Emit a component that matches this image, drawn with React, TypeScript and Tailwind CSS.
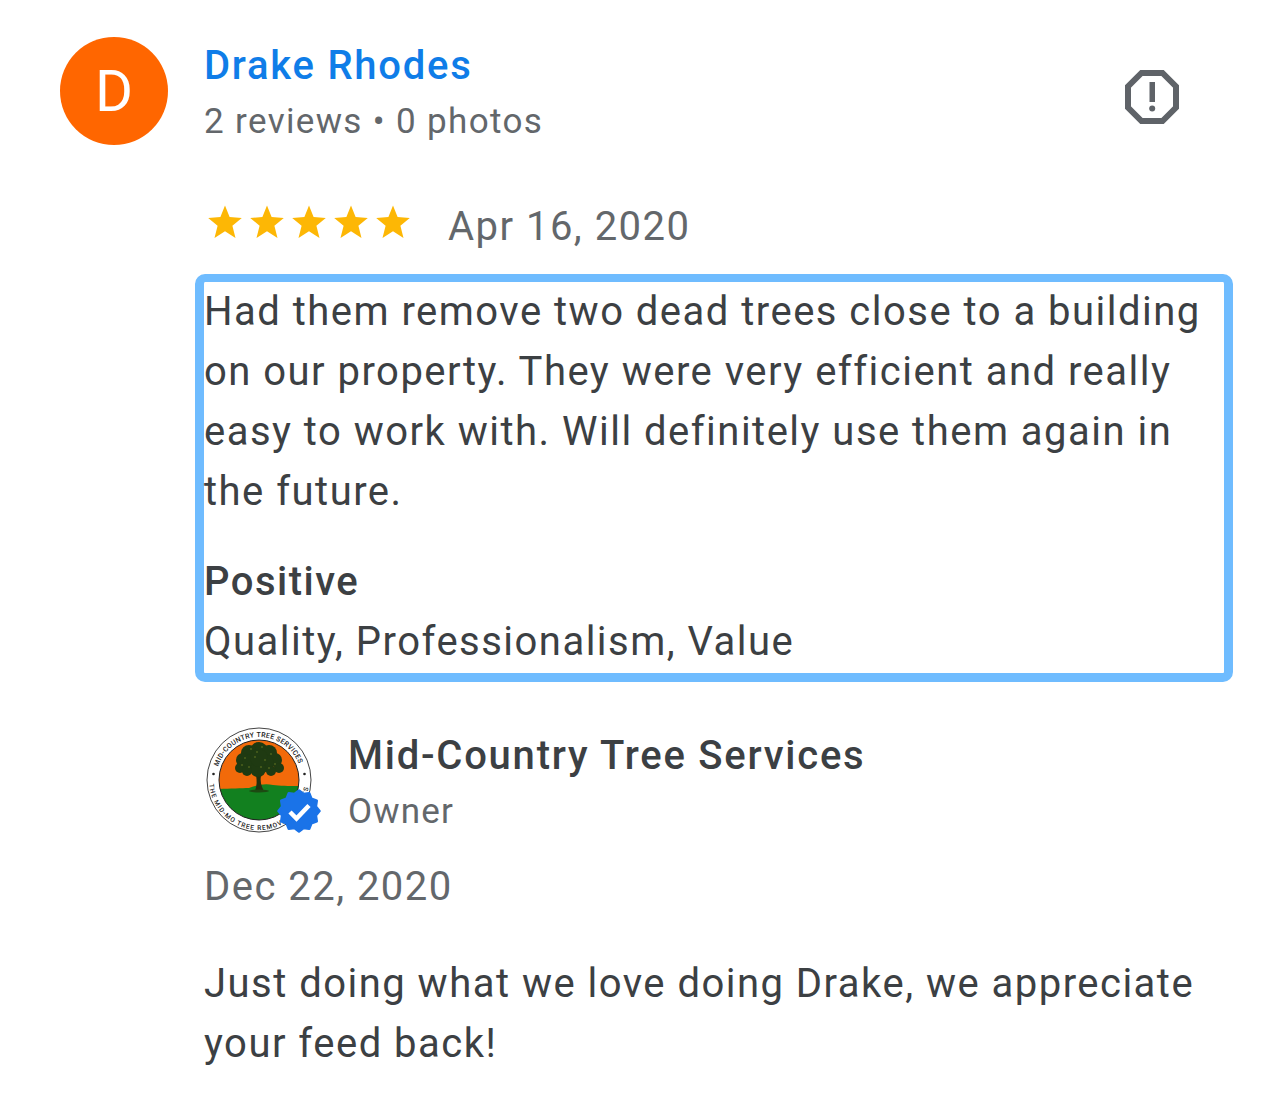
const Star = () => (
  <svg width="34" height="34" viewBox="0 0 34 34" className="block">
    <path d="M17 0.5l4.6 11.6 12.2 .8-9.4 7.9 3.1 12.1-10.5-6.7-10.5 6.7 3.1-12.1L.2 12.9l12.2-.8z" fill="#fdb705" />
  </svg>
);

const badgePoints = Array.from({ length: 24 }, (_, i) => {
  const r = i % 2 === 0 ? 20.5 : 17.5;
  const a = (i * Math.PI) / 12 - Math.PI / 2;
  return `${(22 + r * Math.cos(a)).toFixed(2)},${(22 + r * Math.sin(a)).toFixed(2)}`;
}).join(" ");

const leaves: [number, number, number][] = [
  [54, 24, 9], [44, 26, 8], [64, 26, 8], [38, 33, 7], [70, 33, 7], [35, 41, 5], [74, 41, 5],
  [46, 36, 9], [60, 36, 9], [53, 42, 8], [42, 44, 5], [66, 44, 5], [54, 31, 9],
];
const specks: [number, number][] = [
  [46, 22], [57, 20], [66, 27], [40, 31], [50, 30], [60, 33], [70, 37], [44, 40], [56, 40], [37, 38], [64, 41], [52, 25],
];

const Logo = () => (
  <div className="relative w-[120px] h-[110px] shrink-0 ml-[1px]">
    <svg width="110" height="110" viewBox="0 0 110 110" className="block">
      <defs>
        <clipPath id="inner"><circle cx="54" cy="53" r="40" /></clipPath>
        <path id="topArc" d="M13.100 39.700A43 43 0 0 1 94.900 39.700" />
        <path id="botArc" d="M4.200 57.400A50 50 0 0 0 103.800 57.400" />
      </defs>
      <circle cx="54" cy="53" r="52" fill="#fff" stroke="#444" strokeWidth="1" />
      <g clipPath="url(#inner)">
        <rect x="0" y="0" width="110" height="66" fill="#f26a0a" />
        <path d="M10 62c12 0 26-1 34-1 8-3 16-5 24-3 8 1 18 1 32 1v50H10z" fill="#12801f" />
      </g>
      <circle cx="54" cy="53" r="40" fill="none" stroke="#222" strokeWidth="1" />
      <path d="M50 64c2-6 2-10 1-16h5c-1 6 0 11 3 16z" fill="#23300f" />
      <ellipse cx="54" cy="64" rx="10" ry="1.500" fill="#1c4a12" />
      <g fill="#1f3a12">
        {leaves.map(([x, y, r]) => <circle key={`${x}-${y}`} cx={x} cy={y} r={r} />)}
      </g>
      <g fill="#7d8a2a">
        {specks.map(([x, y]) => <circle key={`${x}-${y}`} cx={x} cy={y} r={0.7} />)}
      </g>
      <circle cx="8.500" cy="47" r="1.300" fill="#222" />
      <circle cx="99.500" cy="47" r="1.300" fill="#222" />
      <text fontFamily="Roboto, sans-serif" fontSize="7" fontWeight="500" fill="#222">
        <textPath href="#topArc" textLength="106" lengthAdjust="spacing">MID-COUNTRY TREE SERVICES</textPath>
      </text>
      <text fontFamily="Roboto, sans-serif" fontSize="6.500" fontWeight="500" fill="#222">
        <textPath href="#botArc" textLength="146" lengthAdjust="spacing">THE MID-MO TREE REMOVAL EXPERTS</textPath>
      </text>
    </svg>
    <svg width="44" height="44" viewBox="0 0 44 44" className="absolute left-[72px] top-[62px]">
      <polygon points={badgePoints} fill="#1a73e8" stroke="#1a73e8" strokeWidth="2.500" strokeLinejoin="round" />
      <path d="M13 23l6.500 6.500L32 16.500" fill="none" stroke="#fff" strokeWidth="4.500" />
    </svg>
  </div>
);

export default function App() {
  return (
    <div className="w-[1284px] h-[1100px] bg-white overflow-hidden pl-[60px] pt-[37px] pr-[51px] font-['Roboto',sans-serif] tracking-[1.48px] text-[#3c4043]">
      <div className="flex">
        <div className="w-[108px] h-[108px] rounded-full bg-[#ff6600] text-white flex items-center justify-center text-[58px] shrink-0 mr-[36px] tracking-normal">
          D
        </div>
        <div className="flex-1 flex items-start justify-between pr-[53px]">
          <div className="pt-[1px]">
            <div className="text-[40px] leading-[56px] font-medium text-[#0f7de8] tracking-[1.75px]">Drake Rhodes</div>
            <div className="text-[35px] leading-[56px] text-[#63676b] tracking-[1.35px]">2 reviews • 0 photos</div>
          </div>
          <svg width="56" height="56" viewBox="0 0 56 56" className="mt-[32px]">
            <path d="M17.500 4h21L52 17.500v21L38.500 52h-21L4 38.500v-21z" fill="none" stroke="#5f6368" strokeWidth="6" />
            <rect x="25.500" y="13" width="5.500" height="20" fill="#5f6368" />
            <circle cx="28.200" cy="39.500" r="3" fill="#5f6368" />
          </svg>
        </div>
      </div>
      <div className="pl-[144px]">
        <div className="flex items-center mt-[42px] h-[70px]">
          <div className="flex gap-[8px] pl-[4px] -mt-[11px]">
            <Star /><Star /><Star /><Star /><Star />
          </div>
          <div className="ml-[38px] text-[40px] text-[#63676b]">Apr 16, 2020</div>
        </div>
        <div className="-ml-[9px] border-x-[9px] border-t-[8px] border-b-[9px] border-[#6fbcff] rounded-[10px] mt-[12px] h-[408px] text-[40px] leading-[60px]">
          <div>
            Had them remove two dead trees close to a building<br />
            on our property. They were very efficient and really<br />
            easy to work with. Will definitely use them again in<br />
            the future.
          </div>
          <div className="mt-[30px] font-medium">Positive</div>
          <div>Quality, Professionalism, Value</div>
        </div>
        <div className="flex mt-[45px]">
          <Logo />
          <div className="ml-[23px]">
            <div className="text-[40px] leading-[56px] font-medium mt-[1px] tracking-[1.75px]">Mid-Country Tree Services</div>
            <div className="text-[35px] leading-[56px] text-[#63676b] tracking-[1.2px]">Owner</div>
          </div>
        </div>
        <div className="text-[40px] leading-[60px] text-[#63676b] mt-[17px]">Dec 22, 2020</div>
        <div className="text-[40px] leading-[60px] mt-[37px]">
          Just doing what we love doing Drake, we appreciate<br />
          your feed back!
        </div>
      </div>
    </div>
  );
}
